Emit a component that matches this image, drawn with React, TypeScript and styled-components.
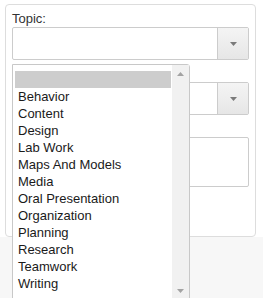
import React from "react";
import styled, { createGlobalStyle } from "styled-components";

const GlobalStyle = createGlobalStyle`
  html, body {
    margin: 0;
    padding: 0;
    background: #ffffff;
    overflow: hidden;
  }
  body {
    font-family: "Liberation Sans", Arial, sans-serif;
    font-size: 13px;
    color: #333;
  }
`;

const Page = styled.div`
  position: relative;
  width: 263px;
  height: 298px;
  display: flex;
  flex-direction: column;
`;

const Top = styled.div`
  background: #ffffff;
  padding: 4px 7px 0 5px;
`;

const Panel = styled.div`
  box-sizing: border-box;
  height: 233px;
  border: 1px solid #dddddd;
  border-radius: 4px;
  padding: 6px 6px;
  display: flex;
  flex-direction: column;
`;

const Field = styled.div`
  display: flex;
  flex-direction: column;
  gap: 1px;
  margin-bottom: 6px;
`;

const Label = styled.label`
  display: block;
  height: 15px;
  line-height: 15px;
  color: #333;
`;

const Select = styled.div`
  box-sizing: border-box;
  height: 33px;
  border: 1px solid #cccccc;
  border-radius: 2px;
  background: #ffffff;
  display: flex;
`;

const SelectValue = styled.div`
  flex: 1;
`;

const SelectButton = styled.div`
  width: 30px;
  border-left: 1px solid #cccccc;
  background: linear-gradient(#f4f4f4 0%, #eeeeee 45%, #e6e6e6 100%);
  display: flex;
  align-items: center;
  justify-content: center;
`;

const TextArea = styled.div`
  box-sizing: border-box;
  width: 237px;
  height: 50px;
  border: 1px solid #cccccc;
  border-radius: 2px;
  background: #ffffff;
`;

const Footer = styled.div`
  flex: 1;
  background: #f7f7f7;
`;

const ListBox = styled.div`
  position: absolute;
  left: 12px;
  top: 64px;
  box-sizing: border-box;
  width: 178px;
  height: 236px;
  border: 1px solid #c8c8c8;
  border-radius: 0 3px 0 0;
  background: #ffffff;
  display: flex;
`;

const Options = styled.ul`
  flex: 1;
  list-style: none;
  margin: 0;
  padding: 6px 1px 0 2px;
`;

const Option = styled.li<{ $selected?: boolean }>`
  height: 17px;
  line-height: 17px;
  padding-left: 3px;
  color: #1a1a1a;
  background: ${(p) => (p.$selected ? "#cdcdcd" : "transparent")};
  white-space: nowrap;
`;

const ScrollBar = styled.div`
  width: 17px;
  background: #f1f1f1;
  display: flex;
  flex-direction: column;
  justify-content: space-between;
`;

const ScrollButton = styled.div`
  height: 17px;
  display: flex;
  align-items: center;
  justify-content: center;
`;

const Arrow = ({ up, color }: { up?: boolean; color: string }) => (
  <svg width="7" height="4" viewBox="0 0 7 4">
    <path d={up ? "M0 4 L3.5 0 L7 4 Z" : "M0 0 L7 0 L3.5 4 Z"} fill={color} />
  </svg>
);

const topics = [
  "",
  "Behavior",
  "Content",
  "Design",
  "Lab Work",
  "Maps And Models",
  "Media",
  "Oral Presentation",
  "Organization",
  "Planning",
  "Research",
  "Teamwork",
  "Writing",
];

export default function App() {
  return (
    <>
      <GlobalStyle />
      <Page>
        <Top>
          <Panel>
            <Field>
              <Label>Topic:</Label>
              <Select>
                <SelectValue />
                <SelectButton>
                  <Arrow color="#7a7a7a" />
                </SelectButton>
              </Select>
            </Field>
            {/* label of this field sits under the open list */}
            <Field>
              <Label />
              <Select>
                <SelectValue />
                <SelectButton>
                  <Arrow color="#7a7a7a" />
                </SelectButton>
              </Select>
            </Field>
            <Field>
              <Label />
              <TextArea />
            </Field>
          </Panel>
        </Top>
        <Footer />
        <ListBox>
          <Options>
            {topics.map((t, i) => (
              <Option key={i} $selected={i === 0}>
                {t || "\u00a0"}
              </Option>
            ))}
          </Options>
          <ScrollBar>
            <ScrollButton>
              <Arrow up color="#a3a3a3" />
            </ScrollButton>
            <ScrollButton>
              <Arrow color="#a3a3a3" />
            </ScrollButton>
          </ScrollBar>
        </ListBox>
      </Page>
    </>
  );
}
